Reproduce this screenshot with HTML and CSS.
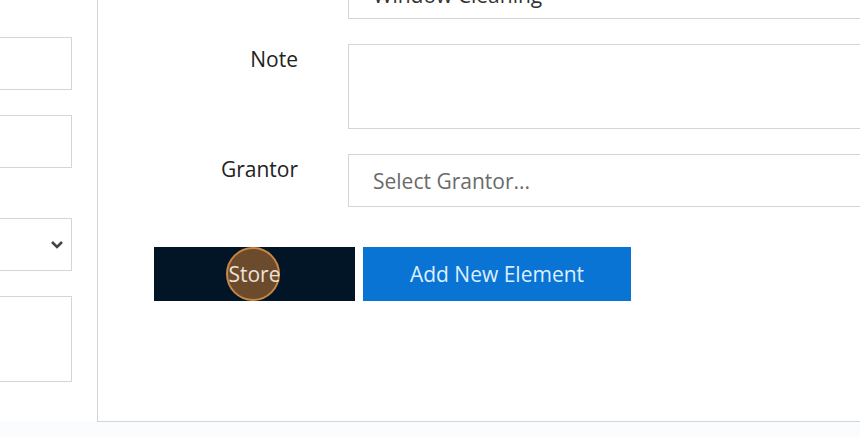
FILE: index.html
```html
<!DOCTYPE html>
<html>
<head>
<meta charset="utf-8">
<link rel="stylesheet" href="styles.css">
</head>
<body>
<div class="page">
  <div class="side">
    <div class="field"><input class="box" type="text"></div>
    <div class="field"><input class="box" type="text"></div>
    <div class="field spaced">
      <div class="box select">
        <svg class="chev" width="14" height="10" viewBox="0 0 14 10"><path d="M2 2 L7 7 L12 2" fill="none" stroke="#444" stroke-width="2.6"/></svg>
      </div>
    </div>
    <div class="field"><div class="box area"></div></div>
  </div>
  <div class="panel">
    <div class="form">
      <div class="label"></div>
      <div class="box ctl top"><span class="val">Window Cleaning</span></div>
      <div class="label">Note</div>
      <div class="box ctl area"></div>
      <div class="label">Grantor</div>
      <div class="box ctl"><span class="ph">Select Grantor...</span></div>
    </div>
    <div class="actions">
      <button class="btn store"><span class="click"></span><span class="txt">Store</span></button>
      <button class="btn add">Add New Element</button>
    </div>
  </div>
</div>
<div class="foot"></div>
</body>
</html>
```

FILE: styles.css
```css
html, body {
  margin: 0;
  padding: 0;
  background: #ffffff;
  overflow: hidden;
  width: 860px;
  height: 438px;
}
body {
  font-family: "Open Sans", "Liberation Sans", sans-serif;
  font-size: 21px;
  color: #222;
}
.page {
  display: flex;
  gap: 25px;
  height: 422px;
}
.side {
  width: 200px;
  margin-left: -128px;
  padding-top: 37px;
  display: flex;
  flex-direction: column;
  gap: 25px;
}
.field.spaced {
  margin-top: 25px;
}
.box {
  box-sizing: border-box;
  border: 1px solid #d5d5d5;
  background: #fff;
  height: 53px;
  width: 100%;
  display: block;
  margin: 0;
  font: inherit;
}
.select {
  display: flex;
  align-items: center;
  justify-content: flex-end;
  padding-right: 7px;
}
.chev {
  display: block;
}
.area {
  height: 86px;
}
.panel {
  flex: 1;
  margin-right: -200px;
  border-left: 1px solid #d5d5d5;
  border-bottom: 1px solid #d5d5d5;
  box-sizing: border-box;
  padding-left: 56px;
  height: 422px;
}
.form {
  display: grid;
  grid-template-columns: 144px 1fr;
  column-gap: 50px;
  row-gap: 25px;
  margin-top: -35px;
}
.label {
  text-align: right;
  line-height: 30px;
  color: #222;
}
.ctl {
  display: flex;
  align-items: center;
  padding-left: 24px;
  height: 53px;
}
.ctl.area {
  height: 85px;
}
.ctl.top {
  height: 54px;
}
.val {
  color: #333;
  margin-top: 6px;
}
.ph {
  color: #6a6a6a;
}
.actions {
  display: flex;
  gap: 8px;
  margin-top: 40px;
}
.btn {
  border: none;
  height: 54px;
  font: inherit;
  padding: 0;
  cursor: pointer;
}
.store {
  position: relative;
  width: 201px;
  background: #021527;
  color: #ece2d8;
  isolation: isolate;
}
.txt {
  position: relative;
}
.add {
  width: 268px;
  background: #0a74d4;
  color: #dcefff;
}
.click {
  position: absolute;
  left: 72px;
  top: 0;
  width: 54px;
  height: 54px;
  border-radius: 50%;
  background: #6c4a2c;
  border: 2px solid #c98644;
  box-sizing: border-box;
}
.foot {
  height: 16px;
  background: #fafcfd;
}
```
